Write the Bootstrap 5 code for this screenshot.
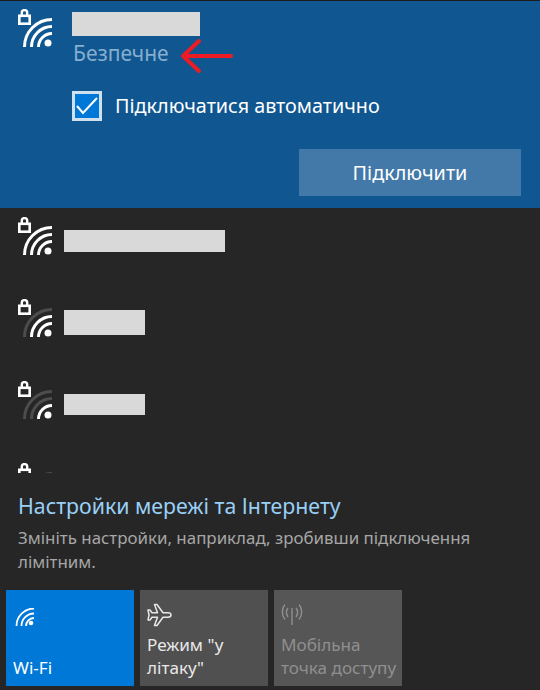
<!DOCTYPE html>
<html lang="uk">
<head>
<meta charset="utf-8">
<title>Wi-Fi</title>
<link rel="stylesheet" href="https://cdn.jsdelivr.net/npm/bootstrap@5.3.0/dist/css/bootstrap.min.css">
<style>
html,body{margin:0;background:#262626;}
body{font-family:"Noto Sans","Open Sans",sans-serif;color:#fff;}
.flyout{width:540px;height:690px;overflow:hidden;background:#262626;}
.active-net{height:208px;background:#105690;border-top:1px solid #1c1c1c;}
.net-head{padding:8px 0 0 18px;}
.net-icon{width:36px;height:40px;flex:none;display:block;}
.net-text{margin-left:18px;}
.mask{background:#d9d9d9;display:block;}
.mask-top{width:128px;height:24px;margin-top:3px;}
.secure{position:relative;font-size:21px;line-height:26px;color:#86aecf;margin-top:4px;margin-left:1px;}
.red-arrow{position:absolute;left:107px;top:-2px;}
.auto-row{padding:25px 0 0 72px;gap:13px;}
.check-box{width:30px;height:30px;background:#0078d7;border:3px solid #cfe0ee;flex:none;display:flex;align-items:center;justify-content:center;}
.auto-label{font-size:19.75px;line-height:30px;}
.connect-row{padding:28px 19px 0 0;}
.connect-btn{width:222px;height:47px;background:#4279a8;border:0;border-radius:0;color:#fff;font-size:19.8px;padding:0;}
.connect-btn:hover{background:#4279a8;color:#fff;}
.net-list{height:265px;overflow:hidden;padding:9px 0 0 18px;}
.net-row{height:82px;gap:10px;}
.m1{width:161px;height:22px;margin-top:13px;}
.m2{width:81px;height:25px;margin-top:11px;}
.m3{width:81px;height:21px;margin-top:13px;}
.settings{padding:0 18px;height:117px;}
.settings-link{display:block;padding-top:18px;font-size:21.3px;line-height:30px;color:#99d0f7;text-decoration:none;}
.settings-desc{font-size:16.9px;line-height:24px;color:#a6a6a6;margin:5px 0 0;}
.tiles{padding-left:6px;gap:6px;}
.tile{width:128px;height:96px;background:#505050;position:relative;font-size:17.1px;line-height:23px;padding:0 0 7px 7px;display:flex;flex-direction:column;justify-content:flex-end;color:#e8e8e8;white-space:nowrap;}
.tile-on{background:#0078d7;color:#fff;}
.tile-off{background:#565656;color:#8f8f8f;}
.tile-icon{position:absolute;left:7px;top:12px;display:block;}
.tile-on .tile-icon{left:9px;top:18px;}
</style>
</head>
<body>
<svg width="0" height="0" class="d-block position-absolute">
<defs>
<symbol id="lock" viewBox="0 0 13 16">
<path d="M3.800 7V3.800a2.700 2.700 0 0 1 5.400 0V7" fill="none" stroke="#fff" stroke-width="2.400"/>
<rect x="1.300" y="6.800" width="10.400" height="7.900" fill="none" stroke="#fff" stroke-width="2.600"/>
</symbol>
</defs>
</svg>
<div class="flyout">
<section class="active-net">
<div class="net-head d-flex">
<svg class="net-icon" viewBox="0 0 36 40"><use href="#lock" width="13" height="16"/><g fill="none" stroke="#fff" stroke-width="3"><path d="M6.500 38A27.500 27.500 0 0 1 34 10.500"/><path d="M13.500 38A20.500 20.500 0 0 1 34 17.500"/><path d="M20.500 38A13.500 13.500 0 0 1 34 24.500"/></g><circle cx="30" cy="34" r="3.500" fill="#fff"/></svg>
<div class="net-text">
<span class="mask mask-top"></span>
<div class="secure">Безпечне
<svg class="red-arrow" width="54" height="36" viewBox="0 0 54 36"><path d="M51 18H4M19 3 3 18l16 15" fill="none" stroke="#ed1c24" stroke-width="4" stroke-linecap="round" stroke-linejoin="round"/></svg>
</div>
</div>
</div>
<div class="auto-row d-flex align-items-center">
<span class="check-box"><svg width="22" height="18" viewBox="0 0 22 18"><path d="M1 9l6 7L21 1" fill="none" stroke="#fff" stroke-width="2"/></svg></span>
<span class="auto-label">Підключатися автоматично</span>
</div>
<div class="connect-row d-flex justify-content-end">
<button type="button" class="btn connect-btn">Підключити</button>
</div>
</section>
<section class="net-list">
<div class="net-row d-flex">
<svg class="net-icon" viewBox="0 0 36 40"><use href="#lock" width="13" height="16"/><g fill="none" stroke="#fff" stroke-width="3"><path d="M6.500 38A27.500 27.500 0 0 1 34 10.500"/><path d="M13.500 38A20.500 20.500 0 0 1 34 17.500"/><path d="M20.500 38A13.500 13.500 0 0 1 34 24.500"/></g><circle cx="30" cy="34" r="3.500" fill="#fff"/></svg>
<span class="mask m1"></span>
</div>
<div class="net-row d-flex">
<svg class="net-icon" viewBox="0 0 36 40"><use href="#lock" width="13" height="16"/><g fill="none" stroke-width="3"><path stroke="#4d4d4d" d="M6.500 38A27.500 27.500 0 0 1 34 10.500"/><path stroke="#fff" d="M13.500 38A20.500 20.500 0 0 1 34 17.500"/><path stroke="#fff" d="M20.500 38A13.500 13.500 0 0 1 34 24.500"/></g><circle cx="30" cy="34" r="3.500" fill="#fff"/></svg>
<span class="mask m2"></span>
</div>
<div class="net-row d-flex">
<svg class="net-icon" viewBox="0 0 36 40"><use href="#lock" width="13" height="16"/><g fill="none" stroke-width="3"><path stroke="#4d4d4d" d="M6.500 38A27.500 27.500 0 0 1 34 10.500"/><path stroke="#4d4d4d" d="M13.500 38A20.500 20.500 0 0 1 34 17.500"/><path stroke="#fff" d="M20.500 38A13.500 13.500 0 0 1 34 24.500"/></g><circle cx="30" cy="34" r="3.500" fill="#fff"/></svg>
<span class="mask m3"></span>
</div>
<div class="net-row d-flex">
<svg class="net-icon" viewBox="0 0 36 40"><use href="#lock" width="13" height="16"/><path stroke="#4d4d4d" stroke-width="3" fill="none" d="M6.500 38A27.500 27.500 0 0 1 34 10.500"/></svg>
</div>
</section>
<section class="settings">
<a class="settings-link" href="#">Настройки мережі та Інтернету</a>
<p class="settings-desc">Змініть настройки, наприклад, зробивши підключення лімітним.</p>
</section>
<section class="tiles d-flex">
<div class="tile tile-on">
<svg class="tile-icon" width="20" height="20" viewBox="0 0 20 20"><g fill="none" stroke="#fff" stroke-width="1.800"><path d="M1.500 18A17.500 17.500 0 0 1 19 .500"/><path d="M6.500 18A12.500 12.500 0 0 1 19 5.500"/><path d="M11 18A8 8 0 0 1 19 10"/></g><circle cx="16" cy="15" r="2.300" fill="#fff"/></svg>
<span>Wi-Fi</span></div>
<div class="tile">
<svg class="tile-icon" width="26" height="26" viewBox="0 0 26 26"><path d="M24 13c0-1.300-1.500-2.200-3-2.200h-5L10 2.500H7.500l3 8.300H5L3 8H1l1 5-1 5h2l2-2.800h5.500l-3 8.300H10l6-8.300h5c1.500 0 3-.9 3-2.200z" fill="none" stroke="#e8e8e8" stroke-width="1.500" stroke-linejoin="round"/></svg>
<span>Режим "у<br>літаку"</span></div>
<div class="tile tile-off">
<svg class="tile-icon" width="26" height="26" viewBox="0 0 26 26"><g fill="none" stroke="#8f8f8f" stroke-width="1.400"><path d="M11 6v17"/><path d="M7 6c-2 2.500-2 6 0 9M15 6c2 2.500 2 6 0 9"/><path d="M4 2.500c-3.500 4-3.500 11 0 15M18 2.500c3.500 4 3.500 11 0 15"/></g></svg>
<span>Мобільна<br>точка доступу</span></div>
</section>
</div>
</body>
</html>
